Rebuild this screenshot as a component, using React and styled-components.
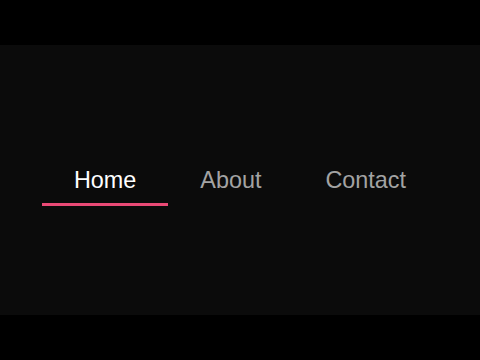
import React, { useState } from "react";
import styled, { createGlobalStyle } from "styled-components";

const Global = createGlobalStyle`
  html, body { margin: 0; padding: 0; background: #000; }
  body { font-family: "Liberation Sans", Arial, sans-serif; }
`;

const Screen = styled.div`
  width: 480px;
  height: 360px;
  background: #000;
  display: flex;
  flex-direction: column;
  justify-content: center;
`;

const Stage = styled.div`
  height: 270px;
  background: #0b0b0b;
  display: flex;
  align-items: center;
  justify-content: center;
`;

const Nav = styled.nav`
  display: flex;
`;

const Tab = styled.button`
  appearance: none;
  background: none;
  border: none;
  border-bottom: 3px solid ${(p) => (p.$active ? "#ea4a76" : "transparent")};
  padding: 12px 32px 10px;
  margin: 0;
  font-family: "Liberation Sans", Arial, sans-serif;
  font-size: 23.4px;
  line-height: 26px;
  color: ${(p) => (p.$active ? "#ffffff" : "#a3a3a3")};
  cursor: pointer;
`;

const items = ["Home", "About", "Contact"];

export default function App() {
  const [active, setActive] = useState(0);
  return (
    <>
      <Global />
      <Screen>
        <Stage>
          <Nav>
            {items.map((t, i) => (
              <Tab key={t} $active={i === active} onClick={() => setActive(i)}>
                {t}
              </Tab>
            ))}
          </Nav>
        </Stage>
      </Screen>
    </>
  );
}
